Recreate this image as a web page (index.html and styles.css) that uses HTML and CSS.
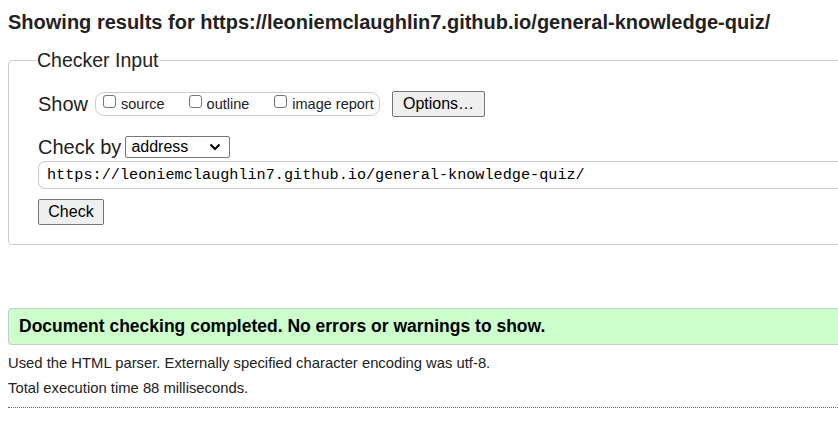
FILE: index.html
```html
<!DOCTYPE html>
<html>
<head>
<meta charset="utf-8">
<link rel="stylesheet" href="styles.css">
</head>
<body>
<h2 class="title">Showing results for https://leoniemclaughlin7.github.io/general-knowledge-quiz/</h2>
<fieldset class="checker">
  <legend class="legend">Checker Input</legend>
  <div class="row show-row">
    <span class="lbl">Show</span>
    <span class="group">
      <label class="opt"><span class="box"></span>source</label>
      <label class="opt"><span class="box"></span>outline</label>
      <label class="opt"><span class="box"></span>image report</label>
    </span>
    <button class="btn opts">Options…</button>
  </div>
  <div class="row by-row">
    <span class="lbl">Check by</span>
    <span class="select">address<svg class="chev" width="12" height="8" viewBox="0 0 12 8"><path d="M1.5 1.5 L6 6 L10.5 1.5" fill="none" stroke="#000" stroke-width="2"/></svg></span>
  </div>
  <div class="url">https://leoniemclaughlin7.github.io/general-knowledge-quiz/</div>
  <button class="btn check">Check</button>
</fieldset>
<div class="success">Document checking completed. No errors or warnings to show.</div>
<p class="info first">Used the HTML parser. Externally specified character encoding was utf-8.</p>
<p class="info">Total execution time 88 milliseconds.</p>
<hr class="rule">
</body>
</html>
```
FILE: styles.css
```css
html, body { margin: 0; padding: 0; background: #fff; }
body {
  padding: 0 0 0 8px;
  width: 900px;
  font-family: "Liberation Sans", Arial, sans-serif;
  color: #222;
}
.title {
  margin: 0;
  padding-top: 10px;
  font-size: 20px;
  line-height: 24px;
  font-weight: bold;
  color: #222;
  white-space: nowrap;
}
.checker {
  margin: 15px 0 0 0;
  padding: 0 0 19px 29px;
  border: 1px solid #ccc;
  border-radius: 4px;
  width: 860px;
  box-sizing: border-box;
}
.legend {
  font-size: 19.5px;
  line-height: 22px;
  padding: 0 1px;
  margin-left: -2px;
  color: #222;
}
.lbl { font-size: 20px; color: #222; }
.row { display: flex; align-items: center; }
.show-row { margin-top: 19px; height: 28px; }
.group {
  display: inline-flex;
  align-items: center;
  margin-left: 7px;
  height: 24px;
  width: 285px;
  box-sizing: border-box;
  border: 1px solid #ccc;
  border-radius: 9px;
  padding-left: 7px;
}
.opt {
  display: inline-flex;
  align-items: center;
  font-size: 14.5px;
  color: #222;
  margin-right: 24px;
}
.opt:nth-child(2) { margin-right: 25px; }
.opt:last-child { margin-right: 0; }
.box {
  width: 13px; height: 13px;
  box-sizing: border-box;
  border: 1px solid #767676;
  border-radius: 3px;
  margin-right: 5px;
  position: relative; top: -3px;
}
.btn {
  font-family: "Liberation Sans", Arial, sans-serif;
  font-size: 16px;
  color: #000;
  background: #efefef;
  border: 1px solid #767676;
  border-radius: 2px;
  padding: 0 6px;
  height: 26px;
}
.opts { margin-left: 12px; width: 93px; }
.by-row { margin-top: 17px; height: 24px; }
.select {
  display: inline-flex;
  align-items: center;
  justify-content: space-between;
  margin-left: 4px;
  width: 105px;
  height: 22px;
  box-sizing: border-box;
  border: 1px solid #767676;
  border-radius: 2px;
  padding: 0 8px 0 5px;
  font-size: 16px;
  color: #000;
}
.url {
  margin-top: 2px;
  height: 28px;
  box-sizing: border-box;
  border: 1px solid #ccc;
  border-right: none;
  border-radius: 7px 0 0 7px;
  padding-left: 8px;
  font-family: "Liberation Mono", "DejaVu Sans Mono", monospace;
  font-size: 15.2px;
  line-height: 26px;
  color: #000;
}
.check { margin-top: 10px; width: 66px; height: 26px; display: block; }
.success {
  margin-top: 63px;
  height: 37px;
  box-sizing: border-box;
  background: #ccffcc;
  border: 1px solid #ccc;
  border-right: none;
  border-radius: 4px 0 0 4px;
  padding-left: 10px;
  font-size: 17.5px;
  font-weight: bold;
  line-height: 34px;
  color: #000;
}
.info {
  margin: 0;
  font-size: 14.8px;
  line-height: 25px;
  color: #222;
}
.info.first { margin-top: 6px; }
.rule {
  margin: 6px 0 0 0;
  border: none;
  border-top: 1px dotted #666;
}
```
